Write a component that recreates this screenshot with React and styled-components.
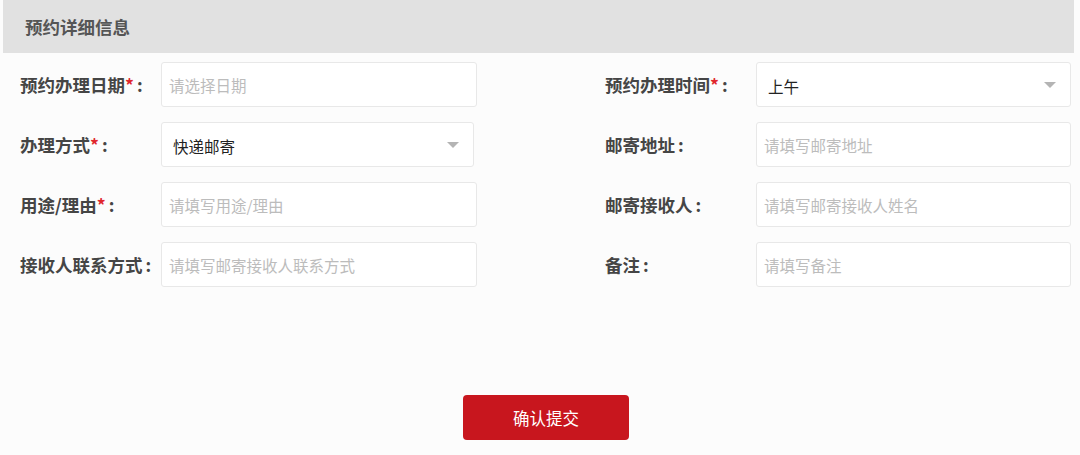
import React from "react"
import styled, { createGlobalStyle } from "styled-components"

const GlobalStyle = createGlobalStyle`
  html, body {
    margin: 0;
    padding: 0;
    background: #fcfcfc;
    font-family: "Noto Sans CJK SC", "Noto Sans", sans-serif;
  }
  * {
    box-sizing: border-box;
  }
`

const Page = styled.div`
  width: 1080px;
  height: 455px;
  padding-left: 3px;
  overflow: hidden;
`

const Header = styled.div`
  width: 1071px;
  height: 53px;
  background: #e1e1e1;
  display: flex;
  align-items: center;
  padding-left: 22px;
  h2 {
    margin: 0;
    font-size: 17.5px;
    font-weight: 700;
    color: #555;
  }
`

const Form = styled.form`
  padding: 9px 0 0 17px;
  display: flex;
  flex-direction: column;
  gap: 15px;
`

const Row = styled.div`
  display: grid;
  grid-template-columns: 141px 316px 128px 151px 315px;
  align-items: center;
  height: 45px;
`

const Label = styled.label`
  font-size: 17.5px;
  font-weight: 700;
  color: #454545;
  white-space: nowrap;
  em {
    font-style: normal;
    color: #e0262c;
  }
  i {
    font-style: normal;
    margin-left: 3px;
  }
`

const Field = styled.input`
  width: ${(p) => p.$width || 316}px;
  height: 45px;
  border: 1px solid #e8e8e8;
  border-radius: 3px;
  background: #fff;
  padding: 0 7px;
  font-family: inherit;
  font-size: 15.5px;
  color: #333;
  outline: none;
  &::placeholder {
    color: #bcbcbc;
  }
`

const Select = styled.div`
  width: ${(p) => p.$width || 316}px;
  height: 45px;
  border: 1px solid #e8e8e8;
  border-radius: 3px;
  background: #fff;
  padding: 0 14px 0 11px;
  display: flex;
  align-items: center;
  justify-content: space-between;
  font-size: 15.5px;
  color: #222;
  span {
    padding-top: 3px;
  }
`

const Actions = styled.div`
  display: flex;
  justify-content: center;
  padding: 93px 0 0;
  width: 1071px;
  margin-left: -17px;
`

const Submit = styled.button`
  width: 166px;
  height: 45px;
  border: none;
  border-radius: 4px;
  background: #c8161e;
  color: #fff;
  font-family: inherit;
  font-size: 16.5px;
  margin-left: 15px;
  cursor: pointer;
`

const Arrow = () => (
  <svg width="12" height="6" viewBox="0 0 12 6">
    <path d="M0 0h12L6 6z" fill="#b4b4b4" />
  </svg>
)

const Req = ({ children, required }) => (
  <Label>
    {children}
    {required && <em>*</em>}
    <i>:</i>
  </Label>
)

const Spacer = styled.div``

export default function App() {
  return (
    <Page>
      <GlobalStyle />
      <Header>
        <h2>预约详细信息</h2>
      </Header>
      <Form onSubmit={(e) => e.preventDefault()}>
        <Row>
          <Req required>预约办理日期</Req>
          <Field placeholder="请选择日期" />
          <Spacer />
          <Req required>预约办理时间</Req>
          <Select $width={315}>
            <span>上午</span>
            <Arrow />
          </Select>
        </Row>
        <Row>
          <Req required>办理方式</Req>
          <Select $width={313}>
            <span>快递邮寄</span>
            <Arrow />
          </Select>
          <Spacer />
          <Req>邮寄地址</Req>
          <Field $width={315} placeholder="请填写邮寄地址" />
        </Row>
        <Row>
          <Req required>用途/理由</Req>
          <Field placeholder="请填写用途/理由" />
          <Spacer />
          <Req>邮寄接收人</Req>
          <Field $width={315} placeholder="请填写邮寄接收人姓名" />
        </Row>
        <Row>
          <Req>接收人联系方式</Req>
          <Field placeholder="请填写邮寄接收人联系方式" />
          <Spacer />
          <Req>备注</Req>
          <Field $width={315} placeholder="请填写备注" />
        </Row>
        <Actions>
          <Submit type="submit">确认提交</Submit>
        </Actions>
      </Form>
    </Page>
  )
}
